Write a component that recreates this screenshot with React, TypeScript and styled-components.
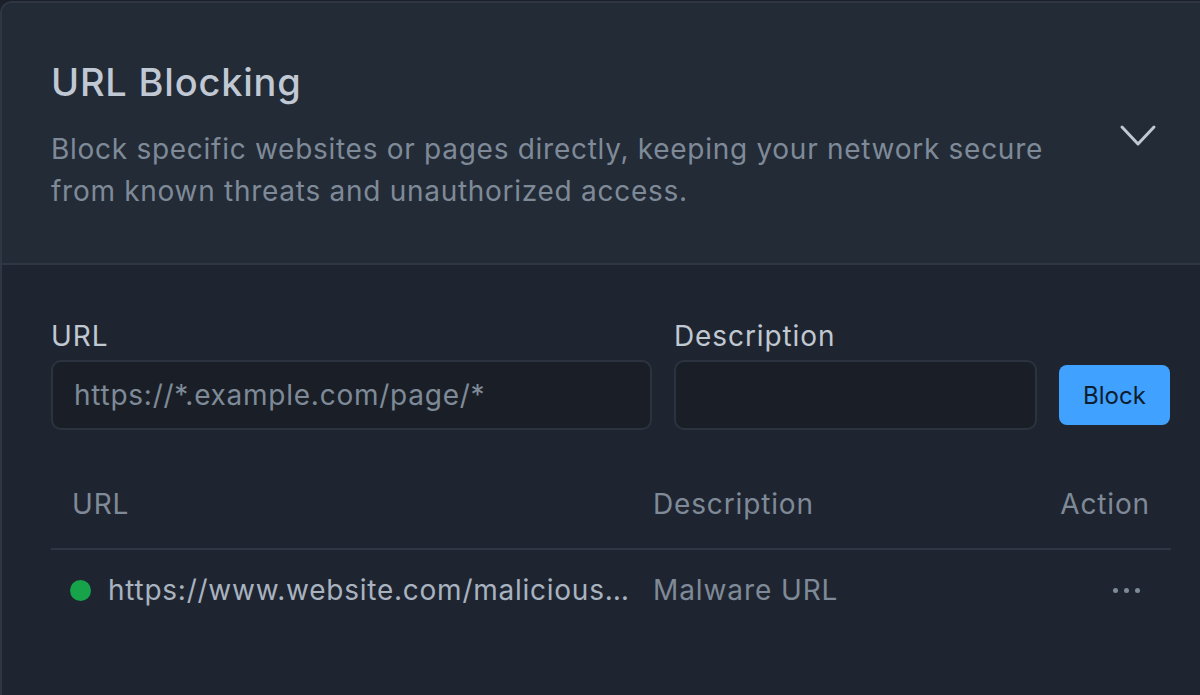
import React from 'react';
import styled, { createGlobalStyle } from 'styled-components';

const COLOR = {
  PAGE: '#1b2029',
  HEADER: '#232b37',
  BODY: '#1f2530',
  BORDER: '#2e3743',
  INPUT: '#1a1f27',
  INPUT_BORDER: '#2c333e',
  TITLE: '#c0c8d3',
  MUTED: '#7f8a98',
  LABEL: '#c0c8d2',
  TEXT: '#a9b3c0',
  BLUE: '#40a1ff',
  BLUE_TEXT: '#0d1c2e',
  GREEN: '#16a34a',
};

const GlobalStyle = createGlobalStyle`
  html, body {
    margin: 0;
    padding: 0;
    background: ${COLOR.PAGE};
    overflow: hidden;
  }
  body {
    font-family: Inter, 'Noto Sans', sans-serif;
    -webkit-font-smoothing: antialiased;
  }
  * {
    box-sizing: border-box;
  }
`;

const ROWS = [
  {
    url: 'https://www.website.com/malicious_download',
    description: 'Malware URL',
    active: true,
  },
];

function ChevronDown() {
  return (
    <svg width="38" height="24" viewBox="0 0 38 24" fill="none">
      <polyline
        points="3,3 19,20 35,3"
        stroke={COLOR.LABEL}
        strokeWidth="3"
        strokeLinecap="round"
        strokeLinejoin="round"
      />
    </svg>
  );
}

export default function App() {
  return (
    <>
      <GlobalStyle />
      <Panel>
        <Header>
          <HeaderText>
            <Title>URL Blocking</Title>
            <Subtitle>
              Block specific websites or pages directly, keeping your network secure from known
              threats and unauthorized access.
            </Subtitle>
          </HeaderText>
          <ToggleButton type="button" aria-label="Collapse">
            <ChevronDown />
          </ToggleButton>
        </Header>
        <Body>
          <Form>
            <Label htmlFor="url">URL</Label>
            <Label htmlFor="desc">Description</Label>
            <span />
            <Input id="url" placeholder="https://*.example.com/page/*" />
            <Input id="desc" />
            <BlockButton type="button">Block</BlockButton>
          </Form>
          <Table>
            <HeadCell>URL</HeadCell>
            <HeadCell>Description</HeadCell>
            <HeadCell $align="right">Action</HeadCell>
            {ROWS.map((row) => (
              <React.Fragment key={row.url}>
                <UrlCell>
                  <StatusDot $active={row.active} />
                  <UrlText>{row.url}</UrlText>
                </UrlCell>
                <Cell>{row.description}</Cell>
                <Cell $align="right">
                  <MoreButton type="button" aria-label="More">
                    <Dot />
                    <Dot />
                    <Dot />
                  </MoreButton>
                </Cell>
              </React.Fragment>
            ))}
          </Table>
        </Body>
      </Panel>
    </>
  );
}

const Panel = styled.section`
  width: 1220px;
  min-height: 700px;
  margin: 1px 0 0 0;
  border-top: 2px solid ${COLOR.BORDER};
  border-left: 2px solid ${COLOR.BORDER};
  border-top-left-radius: 12px;
  background: ${COLOR.BODY};
  overflow: hidden;
`;

const Header = styled.div`
  display: flex;
  align-items: center;
  justify-content: space-between;
  height: 262px;
  padding: 6px 63px 0 49px;
  background: ${COLOR.HEADER};
  border-bottom: 2px solid ${COLOR.BORDER};
`;

const HeaderText = styled.div`
  display: flex;
  flex-direction: column;
  gap: 24px;
  max-width: 1010px;
`;

const Title = styled.h2`
  margin: 0;
  font-size: 38px;
  font-weight: 500;
  line-height: 44px;
  letter-spacing: 0.8px;
  color: ${COLOR.TITLE};
`;

const Subtitle = styled.p`
  margin: 0;
  font-size: 28px;
  line-height: 42px;
  letter-spacing: 0.72px;
  color: ${COLOR.MUTED};
`;

const ToggleButton = styled.button`
  display: flex;
  padding: 0;
  border: 0;
  background: none;
  cursor: pointer;
`;

const Body = styled.div`
  padding: 54px 49px 0 49px;
`;

const Form = styled.div`
  display: grid;
  grid-template-columns: 601px 363px 111px;
  column-gap: 22px;
  row-gap: 7px;
  align-items: center;
`;

const Label = styled.label`
  font-size: 28px;
  line-height: 34px;
  letter-spacing: 0.9px;
  color: ${COLOR.LABEL};
`;

const Input = styled.input`
  height: 70px;
  padding: 0 21px;
  border: 2px solid ${COLOR.INPUT_BORDER};
  border-radius: 10px;
  background: ${COLOR.INPUT};
  font-family: inherit;
  font-size: 28px;
  letter-spacing: 0.75px;
  color: ${COLOR.TEXT};
  outline: none;

  &::placeholder {
    color: ${COLOR.MUTED};
  }
`;

const BlockButton = styled.button`
  height: 60px;
  border: 0;
  border-radius: 8px;
  background: ${COLOR.BLUE};
  font-family: inherit;
  font-size: 24px;
  color: ${COLOR.BLUE_TEXT};
  cursor: pointer;
`;

const Table = styled.div`
  display: grid;
  grid-template-columns: 581px 1fr auto;
  margin-top: 29px;
`;

const HeadCell = styled.div<{ $align?: 'left' | 'right' }>`
  height: 91px;
  display: flex;
  align-items: center;
  justify-content: ${({ $align }) => ($align === 'right' ? 'flex-end' : 'flex-start')};
  padding: 0 21px;
  border-bottom: 2px solid ${COLOR.BORDER};
  font-size: 28px;
  letter-spacing: 0.85px;
  color: ${COLOR.MUTED};
`;

const Cell = styled.div<{ $align?: 'left' | 'right' }>`
  height: 80px;
  display: flex;
  align-items: center;
  justify-content: ${({ $align }) => ($align === 'right' ? 'flex-end' : 'flex-start')};
  padding: 0 21px;
  font-size: 28px;
  letter-spacing: 0.9px;
  color: ${COLOR.MUTED};
`;

const UrlCell = styled(Cell)`
  gap: 17px;
  padding: 0 0 0 19px;
  min-width: 0;
`;

const StatusDot = styled.span<{ $active: boolean }>`
  flex: none;
  width: 21px;
  height: 21px;
  border-radius: 50%;
  background: ${({ $active }) => ($active ? COLOR.GREEN : COLOR.MUTED)};
`;

const UrlText = styled.span`
  overflow: hidden;
  white-space: nowrap;
  text-overflow: ellipsis;
  letter-spacing: 0.75px;
  color: ${COLOR.TEXT};
`;

const MoreButton = styled.button`
  display: flex;
  gap: 6px;
  padding: 10px 10px;
  border: 0;
  background: none;
  cursor: pointer;
`;

const Dot = styled.span`
  width: 5px;
  height: 5px;
  border-radius: 50%;
  background: ${COLOR.MUTED};
`;
